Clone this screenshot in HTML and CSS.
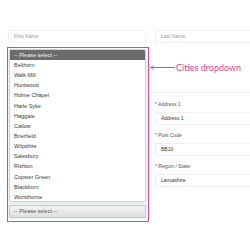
FILE: index.html
```html
<!DOCTYPE html>
<html lang="en">
<head>
    <meta charset="UTF-8">
    <title>Cities dropdown</title>
    <link rel="stylesheet" href="styles.css">
</head>
<body>
    <div class="page">
        <div class="name-row">
            <div class="input first">First Name</div>
            <div class="input last">Last Name</div>
        </div>

        <div class="main-row">
            <div class="cities">
                <div class="list">
                    <div class="list-head">-- Please select --</div>
                    <div class="item">Belthorn</div>
                    <div class="item">Walk Mill</div>
                    <div class="item">Huntwood</div>
                    <div class="item">Holme Chapel</div>
                    <div class="item">Harle Syke</div>
                    <div class="item">Haggate</div>
                    <div class="item">Catlow</div>
                    <div class="item">Brierfield</div>
                    <div class="item">Wilpshire</div>
                    <div class="item">Salesbury</div>
                    <div class="item">Rishton</div>
                    <div class="item">Copster Green</div>
                    <div class="item">Blackburn</div>
                    <div class="item">Worsthorne</div>
                </div>
                <div class="select">-- Please select --</div>

                <!-- annotation pointing at the dropdown -->
                <div class="note">
                    <svg width="25" height="5" viewBox="0 0 25 5">
                        <path d="M0.5 2.5 H25" stroke="#e4448e" stroke-width="1"/>
                        <path d="M0.5 2.5 L3.5 0.8 M0.5 2.5 L3.5 4.2" stroke="#e4448e" stroke-width="0.8" fill="none"/>
                    </svg>
                    <span>Cities dropdown</span>
                </div>
            </div>

            <div class="address">
                <div class="field">
                    <div class="label"><span class="req">*</span> Address 1</div>
                    <div class="input filled">Address 1</div>
                </div>
                <div class="field">
                    <div class="label"><span class="req">*</span> Post Code</div>
                    <div class="input filled">BB10</div>
                </div>
                <div class="field">
                    <div class="label"><span class="req">*</span> Region / State</div>
                    <div class="input filled">Lancashire</div>
                </div>
            </div>
        </div>
    </div>
</body>
</html>
```

FILE: styles.css
```css
* {
    margin: 0;
    padding: 0;
    box-sizing: border-box;
}

body {
    font-family: 'Liberation Sans', Arial, sans-serif;
    background-color: #ffffff;
    color: #333333;
    width: 250px;
    height: 250px;
    overflow: hidden;
}

.page {
    padding-top: 30px;
}

.name-row {
    display: flex;
    gap: 9px;
    padding-left: 8px;
}

.input {
    height: 13px;
    border: 1px solid #efefef;
    border-radius: 2px;
    background-color: #ffffff;
    font-size: 5px;
    line-height: 11px;
    padding-left: 5px;
    color: #9a9a9a;
}

.input.first {
    width: 138px;
}

/* the right-hand inputs run on past the frame edge */
.input.last,
.input.filled {
    flex: 1;
    border-right: none;
    border-top-right-radius: 0;
    border-bottom-right-radius: 0;
}

.main-row {
    display: flex;
    margin-top: 4px;
    padding-left: 7px;
}

.cities {
    flex-shrink: 0;
    position: relative;
    width: 142px;
    height: 175px;
    border: 1px solid #e4448e;
    padding: 1px 2px 0 1px;
}

.list {
    border: 1px solid #d2d2d2;
    border-radius: 2px;
    background-color: #ffffff;
    box-shadow: 0 1px 3px rgba(0, 0, 0, 0.15);
    height: 153px;
    overflow: hidden;
}

.list-head {
    height: 10px;
    background-color: #6c6c6c;
    color: #f2f2f2;
    font-size: 5.5px;
    line-height: 10px;
    padding-left: 4px;
}

.item {
    height: 10.15px;
    font-size: 5.5px;
    line-height: 10.15px;
    padding-left: 4px;
    color: #3a3a3a;
}

.select {
    margin-top: 3px;
    width: 137px;
    height: 13px;
    border: 1px solid #a9d3e3;
    border-radius: 1px;
    background: linear-gradient(#f3f3f3, #dedede);
    box-shadow: 0 0 2px rgba(120, 190, 220, 0.6);
    font-size: 5.5px;
    line-height: 11px;
    padding-left: 4px;
    color: #555555;
}

.note {
    position: absolute;
    top: 15px;
    left: 142px;
    display: flex;
    align-items: center;
    gap: 1px;
    white-space: nowrap;
}

.note svg {
    display: block;
}

.note span {
    font-family: Lato, 'Open Sans', sans-serif;
    font-size: 9px;
    color: #e4448e;
    line-height: 9px;
}

.address {
    flex: 1;
    margin-top: 45px;
    padding-top: 7px;
    padding-left: 6px;
    border-top: 1px solid #f2f2f2;
    display: flex;
    flex-direction: column;
    gap: 6px;
}

.field {
    display: flex;
    flex-direction: column;
    gap: 4px;
}

.label {
    font-size: 5px;
    line-height: 8px;
    color: #555555;
}

.req {
    color: #e0302f;
}

.input.filled {
    color: #333333;
    padding-left: 5px;
}
```
